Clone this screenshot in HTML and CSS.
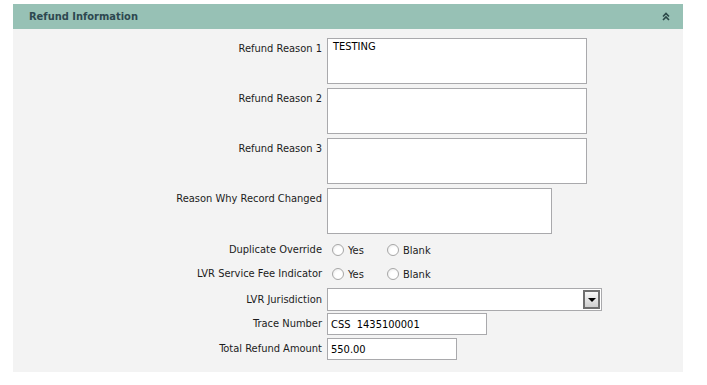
FILE: index.html
```html
<!DOCTYPE html>
<html lang="en">
<head>
  <meta charset="UTF-8">
  <title>Refund Information</title>
  <link rel="stylesheet" href="styles.css">
</head>
<body>

  <div class="panel">
    <div class="panel-head">
      <span class="panel-title">Refund Information</span>
      <svg class="collapse-icon" width="8" height="9" viewBox="0 0 8 9">
        <path d="M1 4.5 L4 1.5 L7 4.5 M1 8 L4 5 L7 8" fill="none" stroke="#2b4848" stroke-width="1.6"/>
      </svg>
    </div>

    <div class="panel-body">
      <div class="row tall">
        <label>Refund Reason 1</label>
        <textarea class="big">TESTING</textarea>
      </div>
      <div class="row tall">
        <label>Refund Reason 2</label>
        <textarea class="big"></textarea>
      </div>
      <div class="row tall">
        <label>Refund Reason 3</label>
        <textarea class="big"></textarea>
      </div>
      <div class="row tall">
        <label>Reason Why Record Changed</label>
        <textarea class="mid"></textarea>
      </div>

      <div class="row radio-row">
        <label>Duplicate Override</label>
        <div class="options">
          <span class="option"><input type="radio" name="dup"> Yes</span>
          <span class="option"><input type="radio" name="dup"> Blank</span>
        </div>
      </div>
      <div class="row radio-row">
        <label>LVR Service Fee Indicator</label>
        <div class="options">
          <span class="option"><input type="radio" name="fee"> Yes</span>
          <span class="option"><input type="radio" name="fee"> Blank</span>
        </div>
      </div>

      <div class="row select-row">
        <label>LVR Jurisdiction</label>
        <div class="select-box">
          <span class="select-value"></span>
          <span class="select-btn"><span class="arrow"></span></span>
        </div>
      </div>
      <div class="row input-row">
        <label>Trace Number</label>
        <input type="text" class="trace" value="CSS  1435100001">
      </div>
      <div class="row input-row last">
        <label>Total Refund Amount</label>
        <input type="text" class="amount" value="550.00">
      </div>
    </div>
  </div>

</body>
</html>
```

FILE: styles.css
```css
body {
  margin: 0;
  background-color: #ffffff;
  font-family: Tahoma, "DejaVu Sans Condensed", "Liberation Sans", sans-serif;
  font-size: 11px;
  color: #1c1c1c;
}

.panel {
  width: 670px;
  margin: 4px 0 0 13px;
}

.panel-head {
  height: 25px;
  background-color: #97c1b5;
  display: flex;
  align-items: center;
  justify-content: space-between;
  padding: 0 13px 0 16px;
}

.panel-title {
  font-weight: bold;
  color: #2d4850;
}

.collapse-icon {
  display: block;
  margin-top: -1px;
}

.panel-body {
  background-color: #f3f3f3;
  padding: 9px 0 12px 0;
}

.row {
  display: flex;
}

.row label {
  width: 314px;
  flex-shrink: 0;
  padding-right: 5px;
  box-sizing: border-box;
  text-align: right;
  line-height: 14px;
}

.row.tall {
  height: 46px;
  margin-bottom: 4px;
}

.row.tall label {
  padding-top: 4px;
}

.radio-row,
.select-row,
.input-row {
  align-items: center;
}

textarea,
input[type="text"] {
  font-family: inherit;
  font-size: 11px;
  color: #000;
  background-color: #fff;
  border: 1px solid #a9a9ac;
  box-sizing: border-box;
  margin: 0;
  outline: none;
}

textarea {
  height: 46px;
  padding: 1px 5px;
  line-height: 14px;
  resize: none;
}

textarea.big {
  width: 260px;
}

textarea.mid {
  width: 225px;
}

.radio-row {
  height: 24px;
}

.options {
  display: flex;
  padding-left: 5px;
}

.option {
  display: flex;
  align-items: center;
  gap: 4px;
}

.option:first-child {
  width: 55px;
}

.option input {
  appearance: none;
  -webkit-appearance: none;
  width: 12px;
  height: 12px;
  margin: 0;
  border: 1px solid #a7a7a7;
  border-radius: 50%;
  background: radial-gradient(circle at 60% 60%, #ffffff 40%, #e4e4e4 100%);
  box-sizing: border-box;
}

.select-row {
  height: 23px;
  margin-top: 2px;
  margin-bottom: 2px;
}

.select-box {
  width: 275px;
  height: 23px;
  box-sizing: border-box;
  border: 1px solid #a9a9ac;
  background-color: #fff;
  display: flex;
  justify-content: flex-end;
  padding: 1px;
}

.select-btn {
  width: 17px;
  height: 19px;
  box-sizing: border-box;
  border: 2px solid #6f6f6f;
  background: linear-gradient(#f7f7f7, #cfcfcf);
  display: flex;
  align-items: center;
  justify-content: center;
}

.arrow {
  width: 0;
  height: 0;
  border-left: 4px solid transparent;
  border-right: 4px solid transparent;
  border-top: 4px solid #000;
}

.input-row {
  height: 22px;
  margin-bottom: 3px;
}

.input-row.last {
  margin-bottom: 0;
}

input[type="text"] {
  height: 22px;
  padding: 0 3px;
}

input.trace {
  width: 160px;
}

input.amount {
  width: 130px;
}
```
